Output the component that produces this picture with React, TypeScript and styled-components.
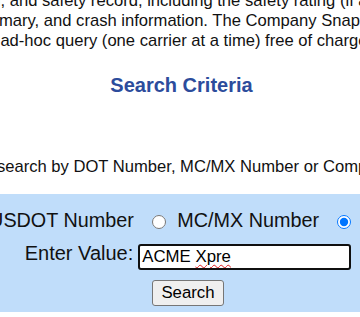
import React from "react";
import styled, { createGlobalStyle } from "styled-components";

const GlobalStyle = createGlobalStyle`
  html, body {
    margin: 0;
    padding: 0;
    background: #ffffff;
    overflow: hidden;
  }
  body {
    font-family: "Liberation Sans", Arial, sans-serif;
    color: #111111;
  }
`;

const Page = styled.div`
  width: 560px;
  margin-left: -94px;
  margin-top: -9px;
  display: flex;
  flex-direction: column;
`;

const Intro = styled.div`
  font-size: 16.6px;
  line-height: 20px;
  white-space: nowrap;
`;

const IntroLine = styled.div<{ $indent: number }>`
  margin-left: ${(p) => p.$indent}px;
`;

const Heading = styled.h2`
  margin: 23px 0 0;
  padding-right: 9px;
  text-align: center;
  font-size: 20px;
  line-height: 23px;
  font-weight: bold;
  color: #2c4c9c;
`;

const Hint = styled.p<{ $indent: number }>`
  margin: 60px 0 0 ${(p) => p.$indent}px;
  font-size: 16.6px;
  line-height: 20px;
  white-space: nowrap;
`;

const FormBox = styled.form`
  margin-top: 17px;
  padding: 15px 0 6px 4px;
  background: #c0ddfa;
  display: flex;
  flex-direction: column;
  align-items: center;
  font-size: 20px;
`;

const RadioRow = styled.div`
  display: flex;
  align-items: center;
  gap: 18px;
  height: 23px;
  line-height: 23px;
  padding-left: 3px;
  font-size: 19.8px;
  white-space: nowrap;
`;

const Option = styled.label`
  display: flex;
  align-items: center;
  gap: 11.5px;
`;

const Radio = styled.input`
  width: 14px;
  height: 14px;
  margin: 2px 0 0;
  accent-color: #0075ff;
`;

const ValueRow = styled.div`
  margin-top: 12px;
  display: flex;
  align-items: flex-start;
  gap: 5px;
`;

const ValueLabel = styled.label`
  margin-top: -2px;
  line-height: 23px;
`;

const Field = styled.div`
  box-sizing: border-box;
  width: 213px;
  height: 26px;
  padding: 0 2px;
  border: 2px solid #101010;
  border-radius: 3px;
  background: #ffffff;
  font-size: 16.8px;
  line-height: 22px;
  color: #000;
  white-space: nowrap;
  overflow: hidden;
`;

const Misspelled = styled.span`
  text-decoration: underline wavy #e02020;
  text-decoration-thickness: 1px;
  text-underline-offset: 2px;
`;

const SearchButton = styled.button`
  margin-top: 10px;
  box-sizing: border-box;
  height: 26px;
  padding: 0 8px;
  border: 1px solid #767676;
  border-radius: 3px;
  background: #efefef;
  font-family: "Liberation Sans", Arial, sans-serif;
  font-size: 16.8px;
  line-height: 22px;
  color: #000;
`;

const introLines = [
  {
    text: "information, and safety record, including the safety rating (if any), a roadside out-of-service inspection",
    indent: 12.4,
  },
  {
    text: "summary, and crash information. The Company Snapshot is available via an",
    indent: 61.6,
  },
  { text: "ad-hoc query (one carrier at a time) free of charge.", indent: 94.4 },
];

export default function App() {
  return (
    <>
      <GlobalStyle />
      <Page>
        <Intro>
          {introLines.map((l) => (
            <IntroLine key={l.text} $indent={l.indent}>
              {l.text}
            </IntroLine>
          ))}
        </Intro>
        <Heading>Search Criteria</Heading>
        <Hint $indent={11.6}>
          Users can search by DOT Number, MC/MX Number or Company Name.
        </Hint>
        <FormBox onSubmit={(e) => e.preventDefault()}>
          <RadioRow>
            <Option>
              <Radio type="radio" name="query_param" value="USDOT" readOnly />
              USDOT Number
            </Option>
            <Option>
              <Radio type="radio" name="query_param" value="MC_MX" readOnly />
              MC/MX Number
            </Option>
            <Option>
              <Radio type="radio" name="query_param" value="NAME" defaultChecked />
              Name
            </Option>
          </RadioRow>
          <ValueRow>
            <ValueLabel>Enter Value:</ValueLabel>
            <Field role="textbox">
              ACME <Misspelled>Xpre</Misspelled>
            </Field>
          </ValueRow>
          <SearchButton type="submit">Search</SearchButton>
        </FormBox>
      </Page>
    </>
  );
}
